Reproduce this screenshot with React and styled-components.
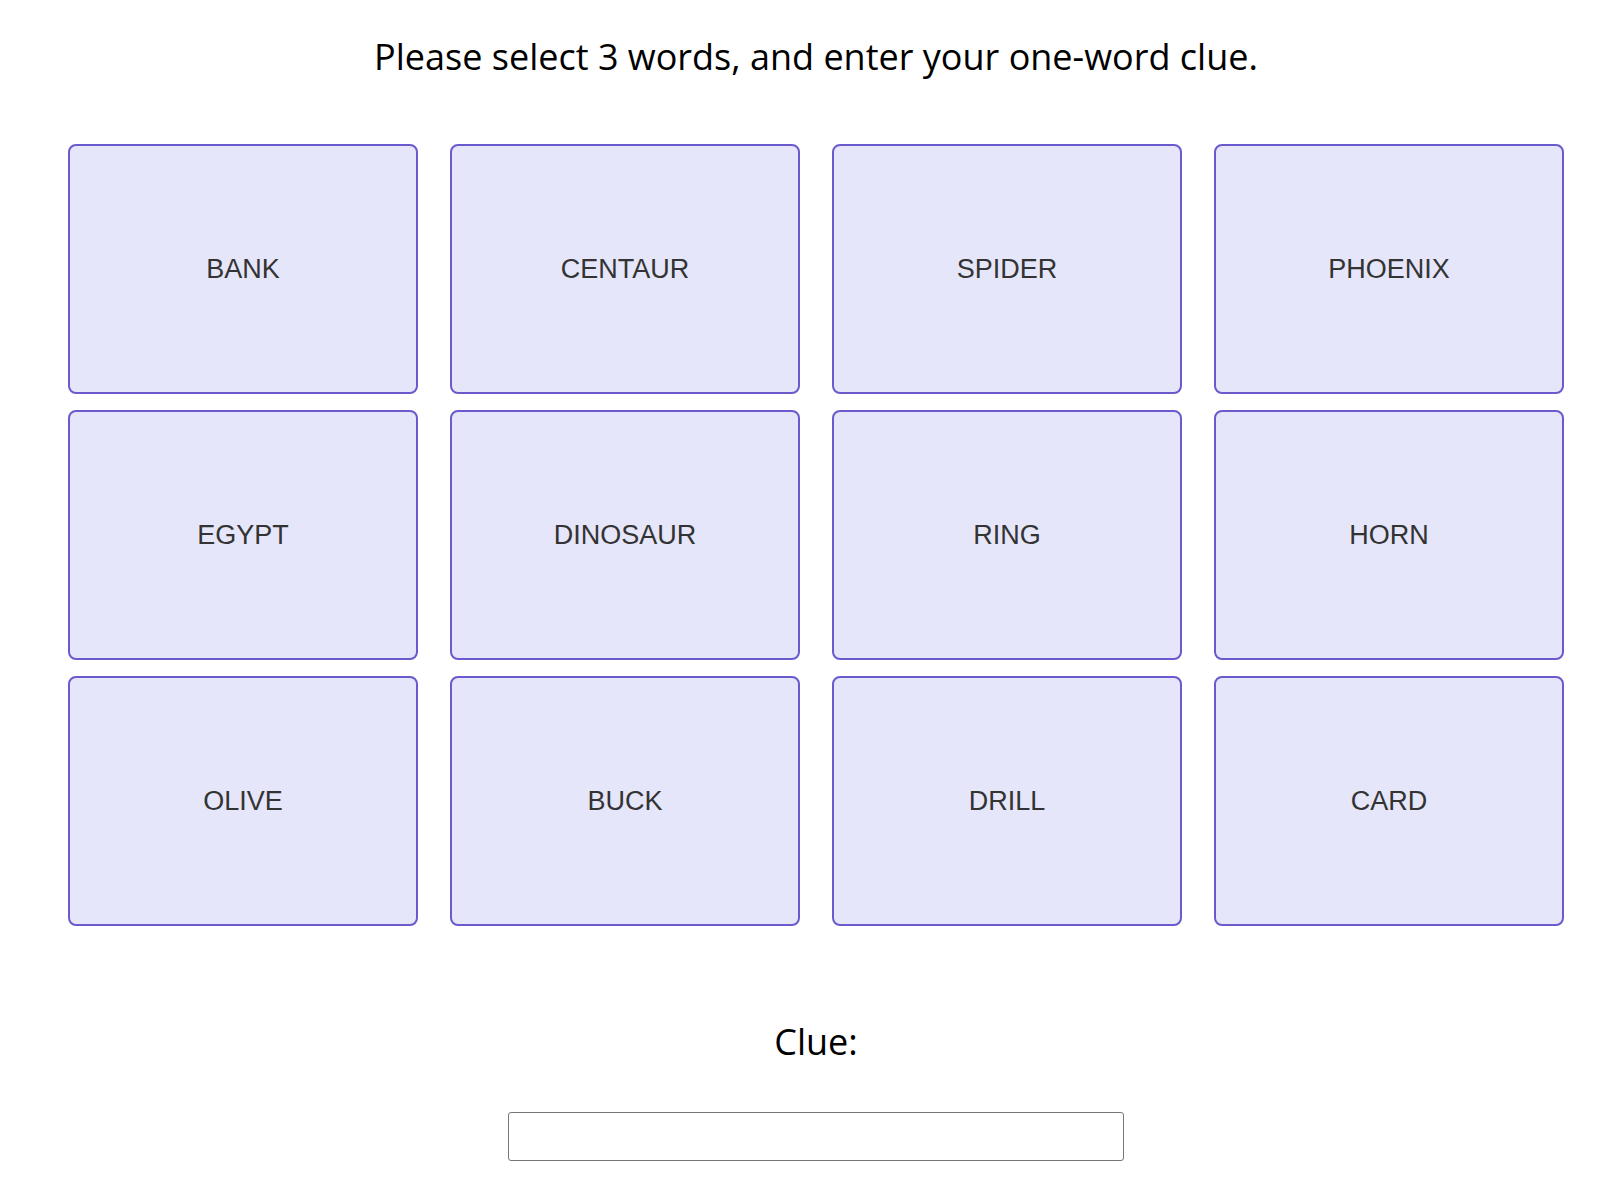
import React from "react";
import styled, { createGlobalStyle } from "styled-components";

const Global = createGlobalStyle`
  html, body { margin: 0; padding: 0; background: #fff; }
  body { font-family: "Open Sans", "Noto Sans", sans-serif; color: #000; }
`;

const Page = styled.div`
  display: flex;
  flex-direction: column;
  align-items: center;
  padding: 32px 48px 0 68px;
`;

const Title = styled.h1`
  margin: 0;
  font-size: 36px;
  font-weight: 400;
  line-height: 49px;
  text-align: center;
`;

const Grid = styled.div`
  display: grid;
  grid-template-columns: repeat(4, 350px);
  grid-auto-rows: 250px;
  column-gap: 32px;
  row-gap: 16px;
  margin-top: 63px;
`;

const Card = styled.button`
  display: flex;
  align-items: center;
  justify-content: center;
  box-sizing: border-box;
  background: #e6e6fa;
  border: 2px solid #6a5acd;
  border-radius: 8px;
  font-family: "Liberation Sans", Arial, sans-serif;
  font-size: 27px;
  color: #333;
  padding: 0;
  cursor: pointer;
`;

const ClueLabel = styled.label`
  margin-top: 91px;
  font-size: 36px;
  line-height: 49px;
`;

const ClueInput = styled.input`
  box-sizing: border-box;
  width: 616px;
  height: 49px;
  margin-top: 46px;
  border: 1px solid #767676;
  border-radius: 3px;
  font-size: 20px;
  padding: 0 8px;
`;

const words = [
  "BANK", "CENTAUR", "SPIDER", "PHOENIX",
  "EGYPT", "DINOSAUR", "RING", "HORN",
  "OLIVE", "BUCK", "DRILL", "CARD",
];

export default function App() {
  return (
    <>
      <Global />
      <Page>
        <Title>Please select 3 words, and enter your one-word clue.</Title>
        <Grid>
          {words.map((w) => (
            <Card key={w}>{w}</Card>
          ))}
        </Grid>
        <ClueLabel htmlFor="clue">Clue:</ClueLabel>
        <ClueInput id="clue" type="text" />
      </Page>
    </>
  );
}
